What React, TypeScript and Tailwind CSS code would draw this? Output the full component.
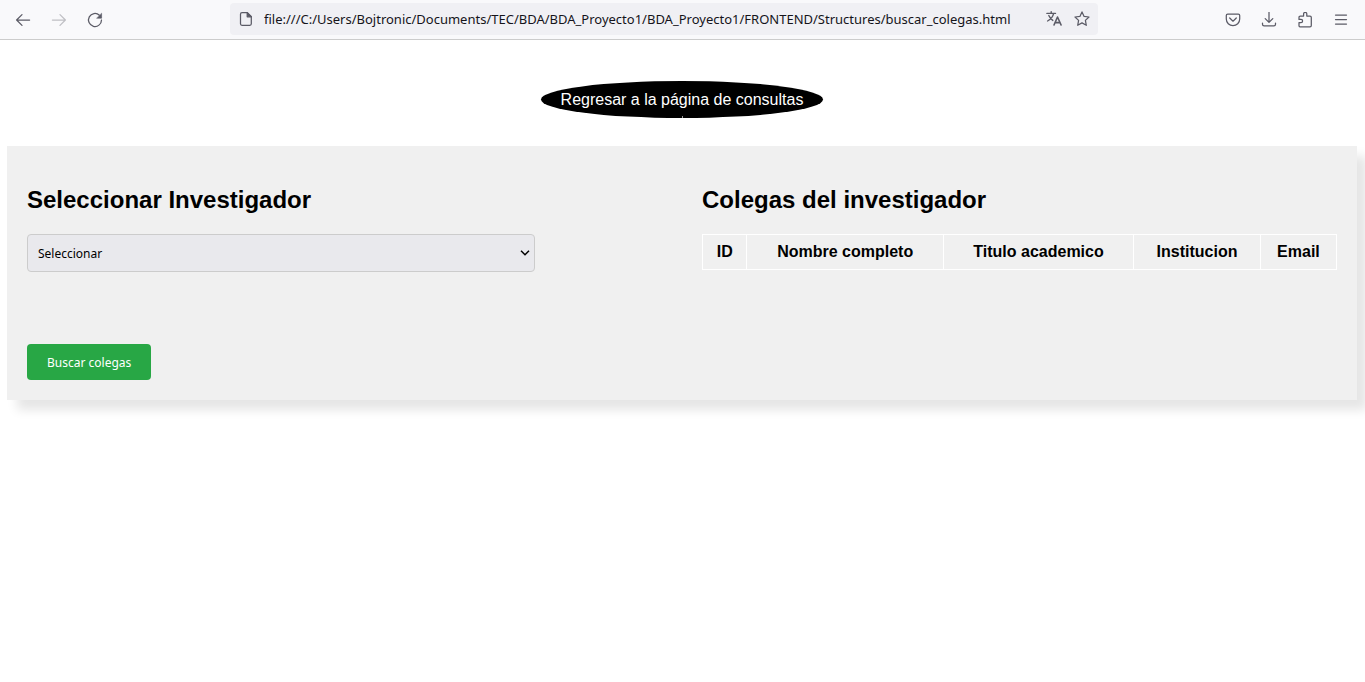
import type { ReactNode } from "react";

const URL_TEXT =
  "file:///C:/Users/Bojtronic/Documents/TEC/BDA/BDA_Proyecto1/BDA_Proyecto1/FRONTEND/Structures/buscar_colegas.html";

const COLUMNS = [
  { name: "ID", width: "w-[42px]" },
  { name: "Nombre completo", width: "w-[31%]" },
  { name: "Titulo academico", width: "w-[30%]" },
  { name: "Institucion", width: "w-[20%]" },
  { name: "Email", width: "w-[12%]" },
];

function Icon({ children }: { children: ReactNode }) {
  return (
    <svg
      viewBox="0 0 16 16"
      className="size-4 shrink-0"
      fill="none"
      stroke="currentColor"
      strokeWidth="1.25"
      strokeLinecap="round"
      strokeLinejoin="round"
      aria-hidden="true"
    >
      {children}
    </svg>
  );
}

function ToolButton({ label, disabled, children }: { label: string; disabled?: boolean; children: ReactNode }) {
  return (
    <button
      type="button"
      aria-label={label}
      disabled={disabled}
      className="flex h-8 w-9 items-center justify-center text-[#5b5b66] disabled:text-[#bfbfc4]"
    >
      <Icon>{children}</Icon>
    </button>
  );
}

function BrowserBar() {
  return (
    <header className="flex h-10 items-center justify-between border-b border-[#cccccc] bg-[#f9f9fb] pl-[5px] pr-[6px]">
      <div className="flex">
        <ToolButton label="Atrás">
          <path d="M14.6 8H1.6M7 2.6 1.6 8 7 13.4" />
        </ToolButton>
        <ToolButton label="Adelante" disabled>
          <path d="M1.4 8h13M9 2.6 14.4 8 9 13.4" />
        </ToolButton>
        <ToolButton label="Recargar">
          <path d="M12.4 3.2A6.5 6.5 0 1 0 14.5 8" />
          <path d="M14.6 1.6v4.6H10z" fill="currentColor" strokeWidth="0.6" />
        </ToolButton>
      </div>
      <div className="mb-px flex h-8 w-[868px] max-w-[65%] items-center rounded bg-[#f0f0f4] px-2 text-[#5b5b66]">
        <Icon>
          <path d="M4 1.7h5.3l4 4v7.1a1.5 1.5 0 0 1-1.5 1.5H4a1.5 1.5 0 0 1-1.5-1.5V3.2A1.5 1.5 0 0 1 4 1.7z" />
          <path d="M9.2 1.7v4.1h4.1z" fill="currentColor" />
        </Icon>
        <input
          type="text"
          aria-label="Dirección"
          defaultValue={URL_TEXT}
          className="ml-[10px] min-w-0 flex-1 bg-transparent pt-[2px] font-['Noto_Sans',sans-serif] text-[13px] text-[#15141a] outline-none"
        />
        <div className="flex gap-3">
          <button type="button" aria-label="Traducir">
            <Icon>
              <path d="M.9 2.4h8.6M5.2.8v1.6M7.6 2.6C6.8 5.8 4.6 8.4 1.6 10M2.8 4.6c.8 1.9 2.2 3.6 4 4.8" strokeWidth="1.4" />
              <path d="M8 14 11.5 6l3.6 8M9.2 11.6h4.6" strokeWidth="1.6" />
            </Icon>
          </button>
          <button type="button" aria-label="Añadir a marcadores">
            <Icon>
              <path d="m8 .9 2.1 4.5 4.9.6-3.6 3.4.9 4.9L8 11.9l-4.3 2.4.9-4.9L1 6l4.9-.6z" />
            </Icon>
          </button>
        </div>
      </div>
      <div className="flex">
        <ToolButton label="Guardar en Pocket">
          <path d="M2.7 2.1h10.6a1.4 1.4 0 0 1 1.4 1.4V7a6.7 6.7 0 0 1-13.4 0V3.5a1.4 1.4 0 0 1 1.4-1.4z" />
          <path d="m4.7 6 3.3 3.2L11.3 6" />
        </ToolButton>
        <ToolButton label="Descargas">
          <path d="M8 .2v10M4.2 6.6 8 10.4l3.8-3.8M1.5 11v1.3a1.6 1.6 0 0 0 1.6 1.6h9.8a1.6 1.6 0 0 0 1.6-1.6V11" />
        </ToolButton>
        <ToolButton label="Extensiones">
          <path d="M3 14.8h10a1.3 1.3 0 0 0 1.3-1.3V5.4A1.3 1.3 0 0 0 13 4.1H9.8V1.9a1.6 1.6 0 0 0-3.2 0v2.2H3.3A1.3 1.3 0 0 0 2 5.4v2h2a1.6 1.6 0 0 1 0 3.2H2v3.2a1 1 0 0 0 1 1z" />
        </ToolButton>
        <ToolButton label="Menú">
          <path d="M2.5 3h11M2.5 7.5h11M2.5 12h11" />
        </ToolButton>
      </div>
    </header>
  );
}

export default function App() {
  return (
    <div className="min-h-screen overflow-x-hidden bg-white font-['Liberation_Sans',Arial,sans-serif] text-base text-black">
      <BrowserBar />
      <main className="pl-[7px] pr-2 pt-[41px]">
        <nav className="flex justify-center">
          <a href="#consultas" className="relative rounded-[50%] bg-black px-5 py-[10px] leading-[17px] text-white">
            Regresar a la página de consultas
            <span className="absolute bottom-0 left-1/2 h-[2px] w-px bg-[#999999]" />
          </a>
        </nav>
        <div className="mt-7 grid grid-cols-2 bg-[#f0f0f0] shadow-[10px_10px_10px_rgba(0,0,0,0.1)]">
          <section className="px-5 pb-5 pt-10">
            <h2 className="mb-5 text-2xl leading-7 font-bold">
              <label htmlFor="investigador">Seleccionar Investigador</label>
            </h2>
            <div className="relative w-4/5">
              <select
                id="investigador"
                className="block h-[38px] w-full appearance-none rounded border border-[#cccccc] bg-[#e9e9ed] px-[10px] pt-[2px] font-['Noto_Sans',sans-serif] text-xs"
              >
                <option>Seleccionar</option>
              </select>
              <svg
                viewBox="0 0 10 6"
                className="pointer-events-none absolute right-[5px] top-4 h-[6px] w-[10px]"
                fill="none"
                stroke="black"
                strokeWidth="1.5"
                aria-hidden="true"
              >
                <path d="m1 .8 4 4 4-4" />
              </svg>
            </div>
            <button
              type="button"
              className="mt-[72px] h-9 rounded bg-[#28a745] px-5 pt-[2px] font-['Noto_Sans',sans-serif] text-xs text-white"
            >
              Buscar colegas
            </button>
          </section>
          <section className="px-5 pb-5 pt-10">
            <h2 className="mb-5 text-2xl leading-7 font-bold">Colegas del investigador</h2>
            <table className="w-full table-fixed border-collapse">
              <thead>
                <tr>
                  {COLUMNS.map((column) => (
                    <th
                      key={column.name}
                      scope="col"
                      className={`border border-white py-2 text-center leading-[18px] font-bold ${column.width}`}
                    >
                      {column.name}
                    </th>
                  ))}
                </tr>
              </thead>
            </table>
          </section>
        </div>
      </main>
    </div>
  );
}
